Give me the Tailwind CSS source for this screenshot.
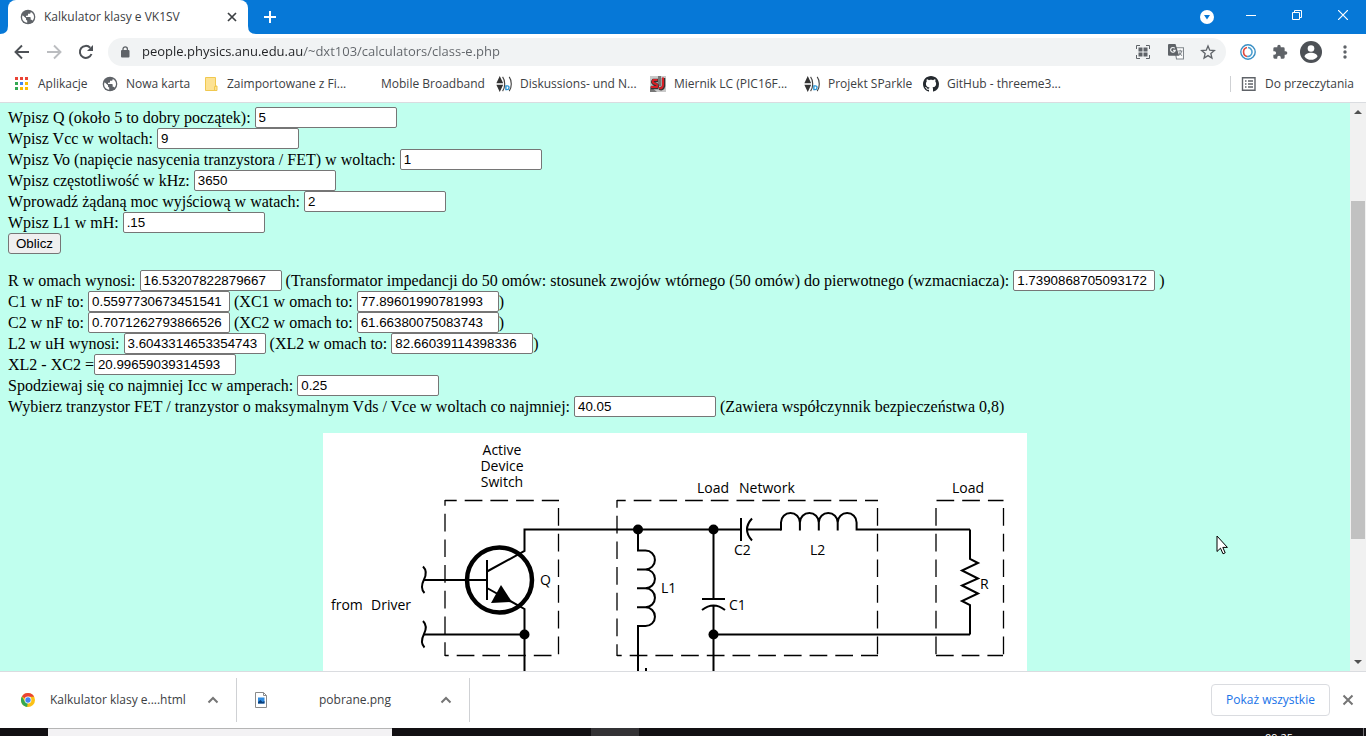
<!DOCTYPE html>
<html lang="pl">
<head>
  <meta charset="UTF-8" />
  <meta name="viewport" content="width=device-width, initial-scale=1.0" />
  <title>Kalkulator klasy e VK1SV</title>
  <script src="https://cdn.jsdelivr.net/npm/@tailwindcss/browser@4"></script>
</head>

<body class="h-screen flex flex-col overflow-hidden bg-white font-['Open_Sans',sans-serif] text-xs text-[#3c4043]">

  <!-- Shared icons -->
  <svg class="hidden">
    <symbol id="globe" viewBox="0 0 24 24">
      <circle cx="12" cy="12" r="11" fill="#5f6368" />
      <path fill="#fff" d="M4 9.500l5 4.500v1.500c0 1 .8 1.800 1.800 1.800v3.200C6 20 2.800 16 3.200 11.500zM18.800 17.500c-.3-.8-1-1.400-1.900-1.400h-.9v-3c0-.5-.4-1-1-1H9v-2h2c.6 0 1-.4 1-1v-2h2c1.100 0 2-.9 2-2v-.5c3 1.200 5 4 5 7.500 0 2-.8 4-2.200 5.400z" />
    </symbol>
    <symbol id="paren" viewBox="0 0 17 17">
      <path fill="#333" d="M4 0l3.500 7.500h-7zM4 17l3.500-7.500h-7z" />
      <path fill="none" stroke="#999" d="M.5 8.500h7" />
      <path fill="none" stroke="#444" stroke-width="1.200" d="M7 1c3 4 3 11 0 15M14 1c3 4 3 11 0 15" />
      <path fill="none" stroke="#2a95d5" stroke-width="1.500" d="M10.500 14.500v-4h1.500q2 0 1.800 2t-2 2z" />
    </symbol>
    <symbol id="chevron" viewBox="0 0 12 12">
      <path fill="none" stroke="#757575" stroke-width="2" d="M1.500 8.500L6 4l4.500 4.500" />
    </symbol>
  </svg>

  <!-- Tab strip -->
  <header class="h-[34px] flex-none flex bg-[#0678d7] pl-2">
    <div class="relative w-60 bg-white rounded-t-lg flex items-center pl-3 pr-2.5">
      <svg class="absolute -left-2 bottom-0 size-2" viewBox="0 0 8 8"><path fill="#fff" d="M8 0v8H0q8 0 8-8" /></svg>
      <svg class="absolute -right-2 bottom-0 size-2" viewBox="0 0 8 8"><path fill="#fff" d="M0 0v8h8q-8 0-8-8" /></svg>
      <svg class="size-4"><use href="#globe" /></svg>
      <span class="ml-2 flex-1 whitespace-nowrap">Kalkulator klasy e VK1SV</span>
      <button class="size-3" aria-label="Zamknij kartę">
        <svg viewBox="0 0 12 12"><path stroke="#3c4043" stroke-width="1.700" d="M2 2l8 8M10 2l-8 8" /></svg>
      </button>
    </div>
    <button class="ml-4 w-3" aria-label="Nowa karta">
      <svg viewBox="0 0 12 12"><path stroke="#fff" stroke-width="2" d="M6 0v12M0 6h12" /></svg>
    </button>
    <div class="ml-auto flex items-center">
      <button class="mr-8" aria-label="Wyszukaj karty">
        <svg class="size-3.5" viewBox="0 0 14 14"><circle cx="7" cy="7" r="7" fill="#fff" /><path fill="#0678d7" d="M4 5h6L7 9.500z" /></svg>
      </button>
      <button class="mr-9 pb-1" aria-label="Minimalizuj">
        <svg class="size-2.5" viewBox="0 0 10 10"><path stroke="#fff" d="M0 5.500h10" /></svg>
      </button>
      <button class="mr-9 pb-1" aria-label="Przywróć">
        <svg class="size-2.5" viewBox="0 0 10 10"><path fill="none" stroke="#fff" d="M.5 2.500h7v7h-7zM2.500 2.500v-2h7v7h-2" /></svg>
      </button>
      <button class="mr-[18px] pb-1" aria-label="Zamknij">
        <svg class="size-2.5" viewBox="0 0 10 10"><path stroke="#fff" stroke-width="1.200" d="M0 0l10 10M10 0L0 10" /></svg>
      </button>
    </div>
  </header>

  <!-- Toolbar -->
  <nav class="h-9 flex-none flex items-center px-3.5">
    <button class="mr-4" aria-label="Wstecz">
      <svg class="size-4" viewBox="0 0 16 16"><path fill="none" stroke="#4d5156" stroke-width="1.900" d="M15 8H2M8 1.500L1.500 8 8 14.500" /></svg>
    </button>
    <button class="mr-4" aria-label="Dalej">
      <svg class="size-4" viewBox="0 0 16 16"><path fill="none" stroke="#bbbdc0" stroke-width="1.900" d="M1 8h13M8 1.500L14.500 8 8 14.500" /></svg>
    </button>
    <button class="mr-3.5" aria-label="Odśwież">
      <svg class="size-4" viewBox="0 0 16 16"><path fill="none" stroke="#4d5156" stroke-width="2" d="M13.500 10a6 6 0 1 1-1.300-6.300" /><path fill="#4d5156" d="M15 1v6H9z" /></svg>
    </button>
    <div class="flex-1 h-7 rounded-full bg-[#f1f3f4] flex items-center pl-3 pr-2.5">
      <svg class="w-2.5 h-3.5 mr-3" viewBox="0 0 10 14"><rect x="1" y="5" width="8.500" height="7.500" rx="1" fill="#5f6368" /><path fill="none" stroke="#5f6368" stroke-width="1.300" d="M3 6V4a2.200 2.200 0 0 1 4.400 0v2" /></svg>
      <input aria-label="Adres" class="flex-1 min-w-0 outline-none text-[13px] bg-[linear-gradient(90deg,#202124_161px,#5f6368_161px)] bg-clip-text text-transparent" value="people.physics.anu.edu.au/~dxt103/calculators/class-e.php" />
      <button class="mr-[18px]" aria-label="Kod QR">
        <svg class="size-3.5" viewBox="0 0 14 14"><path fill="none" stroke="#5f6368" d="M.5 4V.5H4M10 .5h3.500V4M13.500 10v3.500H10M4 13.500H.5V10" /><path fill="#5f6368" d="M2.500 2.500h4v4h-4zM7.500 2.500h4v4h-4zM2.500 7.500h4v4h-4zM7.500 7.500h4v4h-4z" /></svg>
      </button>
      <button class="mr-4" aria-label="Przetłumacz">
        <svg class="size-4" viewBox="0 0 15 15"><path fill="#fff" stroke="#80868b" d="M6 3.500h8.500v10.500H8z" /><path fill="#5f6368" d="M1 0h6l3.500 11H1a1 1 0 0 1-1-1V1a1 1 0 0 1 1-1" /><path fill="none" stroke="#f1f3f4" stroke-width="1.100" d="M6.300 4a2.200 2.200 0 1 0 .5 2H4.800" /><path fill="none" stroke="#80868b" d="M9.500 6.500h4M11.500 5.500v1M13 6.500q-.5 2.500-3 4M10.500 8l2.500 3" /></svg>
      </button>
      <button aria-label="Dodaj do zakładek">
        <svg class="size-4" viewBox="0 0 24 24"><path fill="none" stroke="#5f6368" stroke-width="2" d="M12 3l2.600 6.200 6.900.6-5.200 4.500 1.600 6.700-5.900-3.600L6.100 21l1.600-6.700-5.200-4.500 6.900-.6z" /></svg>
      </button>
    </div>
    <button class="ml-3.5 mr-4" aria-label="Rozszerzenie">
      <svg class="size-4" viewBox="0 0 16 16"><circle cx="8" cy="8" r="7.200" fill="#fff" stroke="#3a8fc4" stroke-width="1.400" /><path fill="none" stroke="#4d9fd0" stroke-width="1.600" d="M8 3.500A4.500 4.500 0 1 1 7 12.500" /><path fill="none" stroke="#e04a3f" stroke-width="1.600" d="M7 12.500A4.600 4.600 0 0 1 7 3.600" /></svg>
    </button>
    <button class="mr-3" aria-label="Rozszerzenia">
      <svg class="size-4" viewBox="0 0 24 24"><path fill="#5f6368" d="M20.500 11H19V7a2 2 0 0 0-2-2h-4V3.500a2.500 2.500 0 0 0-5 0V5H4a2 2 0 0 0-2 2v3.800h1.500a2.700 2.700 0 0 1 0 5.400H2V20a2 2 0 0 0 2 2h3.800v-1.500a2.700 2.700 0 0 1 5.400 0V22H17a2 2 0 0 0 2-2v-4h1.500a2.500 2.500 0 0 0 0-5" /></svg>
    </button>
    <button class="mr-4" aria-label="Profil">
      <svg class="size-[22px]" viewBox="0 0 22 22"><circle cx="11" cy="11" r="11" fill="#4d5156" /><circle cx="11" cy="7.500" r="3.300" fill="#fff" /><path fill="#fff" d="M4.500 15.500c0-2.500 4-3.800 6.500-3.800s6.500 1.300 6.500 3.800a8 8 0 0 1-13 0" /></svg>
    </button>
    <button aria-label="Menu">
      <svg class="w-3.5 h-4" viewBox="0 0 14 16"><g fill="#5f6368"><circle cx="7" cy="3" r="1.700" /><circle cx="7" cy="8" r="1.700" /><circle cx="7" cy="13" r="1.700" /></g></svg>
    </button>
  </nav>

  <!-- Bookmarks bar -->
  <nav class="h-[33px] flex-none flex items-center pl-3.5 pr-3 pb-1 border-b border-[#dadce0] whitespace-nowrap">
    <a href="#" class="w-[88px] flex-none flex items-center gap-2">
      <svg class="size-4" viewBox="0 0 16 16"><path fill="#ea4335" d="M1 1h3v3H1zM6 1h3v3H6zM11 1h3v3h-3z" /><path fill="#34a853" d="M1 6h3v3H1zM1 11h3v3H1z" /><path fill="#4285f4" d="M6 6h3v3H6z" /><path fill="#fbbc04" d="M11 6h3v3h-3zM6 11h3v3H6zM11 11h3v3h-3z" /></svg>
      Aplikacje
    </a>
    <a href="#" class="w-[101px] flex-none flex items-center gap-2"><svg class="size-4"><use href="#globe" /></svg>Nowa karta</a>
    <a href="#" class="w-[154px] flex-none flex items-center gap-2">
      <svg class="size-4" viewBox="0 0 16 16"><path fill="#fde293" stroke="#f0c850" d="M2.500 1.500h10v8.500h1.500v4.500H2.500z" /><path fill="none" stroke="#f0c850" d="M11.500 14v-3.500h2" /></svg>
      Zaimportowane z Fi...
    </a>
    <a href="#" class="w-[139px] flex-none flex items-center gap-2"><span class="size-4"></span>Mobile Broadband</a>
    <a href="#" class="w-[154px] flex-none flex items-center gap-2"><svg class="size-4"><use href="#paren" /></svg>Diskussions- und N...</a>
    <a href="#" class="w-[154px] flex-none flex items-center gap-2">
      <svg class="size-4" viewBox="0 0 16 16"><path fill="#c9c9c9" d="M0 0h16v16H0z" /><path fill="#777" d="M0 10l7 6H0zM8 0h3v10H8z" /><path fill="none" stroke="#333" stroke-width="3.500" d="M8 4.500H3.500q-2 2 1 3.500 4 1 2.500 3.500H1M13.500 2v8q-1 4-4 2" /><path fill="none" stroke="#d61f26" stroke-width="2" d="M7.500 4H3.500q-2 2 1 3.500 4 1 2.500 3.500H1M13 1.500v8q-1 4-4 2" /></svg>
      Miernik LC (PIC16F...
    </a>
    <a href="#" class="w-[119px] flex-none flex items-center gap-2"><svg class="size-4"><use href="#paren" /></svg>Projekt SParkle</a>
    <a href="#" class="flex-none flex items-center gap-2">
      <svg class="size-4" viewBox="0 0 16 16"><path fill="#24292e" d="M8 0C3.580 0 0 3.580 0 8c0 3.540 2.290 6.530 5.470 7.590.4.070.55-.17.55-.38 0-.19-.01-.82-.01-1.490-2.010.37-2.530-.49-2.690-.94-.09-.23-.48-.94-.82-1.130-.28-.15-.68-.52-.01-.53.63-.01 1.080.58 1.230.82.72 1.210 1.870.87 2.330.66.07-.52.28-.87.51-1.070-1.780-.2-3.640-.89-3.640-3.950 0-.87.31-1.590.82-2.150-.08-.2-.36-1.020.08-2.120 0 0 .67-.21 2.200.82.64-.18 1.320-.27 2-.27s1.360.09 2 .27c1.530-1.040 2.200-.82 2.200-.82.44 1.100.16 1.920.08 2.120.51.56.82 1.270.82 2.150 0 3.070-1.870 3.750-3.650 3.950.29.25.54.73.54 1.480 0 1.070-.01 1.930-.01 2.200 0 .21.15.46.55.38A8.010 8.010 0 0 0 16 8c0-4.420-3.580-8-8-8" /></svg>
      GitHub - threeme3...
    </a>
    <a href="#" class="ml-auto flex-none flex items-center gap-2 border-l border-[#cfd1d4] pl-2.5">
      <svg class="size-4" viewBox="0 0 16 16"><path fill="none" stroke="#5f6368" stroke-width="1.400" d="M1.500 1.700h12.500v12.500H1.500z" /><path stroke="#5f6368" stroke-width="1.400" d="M4 5h1.500M7 5h5M4 8h1.500M7 8h5M4 11h1.500M7 11h5" /></svg>
      Do przeczytania
    </a>
  </nav>

  <!-- Page viewport with its scrollbar -->
  <div class="flex-1 min-h-0 flex">
    <main class="flex-1 min-w-0 overflow-hidden bg-[#c0ffee] px-2 pt-1 font-['Liberation_Serif',serif] text-base text-black whitespace-nowrap">
      <form>
        <div class="h-[21px] flex items-center gap-1">
          <label for="q">Wpisz Q (około 5 to dobry początek):</label>
          <input id="q" value="5" class="w-[142px] h-[21px] px-[3px] border border-[#767676] rounded-xs bg-white font-['Liberation_Sans',sans-serif] [font-size:smaller]" />
        </div>
        <div class="h-[21px] flex items-center gap-1">
          <label for="vcc">Wpisz Vcc w woltach:</label>
          <input id="vcc" value="9" class="w-[142px] h-[21px] px-[3px] border border-[#767676] rounded-xs bg-white font-['Liberation_Sans',sans-serif] [font-size:smaller]" />
        </div>
        <div class="h-[21px] flex items-center gap-1">
          <label for="vo">Wpisz Vo (napięcie nasycenia tranzystora / FET) w woltach:</label>
          <input id="vo" value="1" class="w-[142px] h-[21px] px-[3px] border border-[#767676] rounded-xs bg-white font-['Liberation_Sans',sans-serif] [font-size:smaller]" />
        </div>
        <div class="h-[21px] flex items-center gap-1">
          <label for="freq">Wpisz częstotliwość w kHz:</label>
          <input id="freq" value="3650" class="w-[142px] h-[21px] px-[3px] border border-[#767676] rounded-xs bg-white font-['Liberation_Sans',sans-serif] [font-size:smaller]" />
        </div>
        <div class="h-[21px] flex items-center gap-1">
          <label for="pout">Wprowadź żądaną moc wyjściową w watach:</label>
          <input id="pout" value="2" class="w-[142px] h-[21px] px-[3px] border border-[#767676] rounded-xs bg-white font-['Liberation_Sans',sans-serif] [font-size:smaller]" />
        </div>
        <div class="h-[21px] flex items-center gap-1">
          <label for="l1">Wpisz L1 w mH:</label>
          <input id="l1" value=".15" class="w-[142px] h-[21px] px-[3px] border border-[#767676] rounded-xs bg-white font-['Liberation_Sans',sans-serif] [font-size:smaller]" />
        </div>
        <button type="button" class="block w-[53px] h-[21px] leading-none border border-[#767676] rounded-[3px] bg-[#efefef] font-['Liberation_Sans',sans-serif] [font-size:smaller]">Oblicz</button>

        <!-- Results -->
        <div class="mt-4 h-[21px] flex items-center gap-1">
          <label for="r">R w omach wynosi:</label>
          <input id="r" value="16.53207822879667" class="w-[142px] h-[21px] px-[3px] border border-[#767676] rounded-xs bg-white font-['Liberation_Sans',sans-serif] [font-size:smaller]" />
          <label for="ratio">(Transformator impedancji do 50 omów: stosunek zwojów wtórnego (50 omów) do pierwotnego (wzmacniacza):</label>
          <input id="ratio" value="1.7390868705093172" class="w-[142px] h-[21px] px-[3px] border border-[#767676] rounded-xs bg-white font-['Liberation_Sans',sans-serif] [font-size:smaller]" />
          <span>)</span>
        </div>
        <div class="h-[21px] flex items-center gap-1">
          <label for="c1">C1 w nF to:</label>
          <input id="c1" value="0.5597730673451541" class="w-[142px] h-[21px] px-[3px] border border-[#767676] rounded-xs bg-white font-['Liberation_Sans',sans-serif] [font-size:smaller]" />
          <label for="xc1">(XC1 w omach to:</label>
          <div class="flex items-center">
            <input id="xc1" value="77.89601990781993" class="w-[142px] h-[21px] px-[3px] border border-[#767676] rounded-xs bg-white font-['Liberation_Sans',sans-serif] [font-size:smaller]" />
            <span>)</span>
          </div>
        </div>
        <div class="h-[21px] flex items-center gap-1">
          <label for="c2">C2 w nF to:</label>
          <input id="c2" value="0.7071262793866526" class="w-[142px] h-[21px] px-[3px] border border-[#767676] rounded-xs bg-white font-['Liberation_Sans',sans-serif] [font-size:smaller]" />
          <label for="xc2">(XC2 w omach to:</label>
          <div class="flex items-center">
            <input id="xc2" value="61.66380075083743" class="w-[142px] h-[21px] px-[3px] border border-[#767676] rounded-xs bg-white font-['Liberation_Sans',sans-serif] [font-size:smaller]" />
            <span>)</span>
          </div>
        </div>
        <div class="h-[21px] flex items-center gap-1">
          <label for="l2">L2 w uH wynosi:</label>
          <input id="l2" value="3.6043314653354743" class="w-[142px] h-[21px] px-[3px] border border-[#767676] rounded-xs bg-white font-['Liberation_Sans',sans-serif] [font-size:smaller]" />
          <label for="xl2">(XL2 w omach to:</label>
          <div class="flex items-center">
            <input id="xl2" value="82.66039114398336" class="w-[142px] h-[21px] px-[3px] border border-[#767676] rounded-xs bg-white font-['Liberation_Sans',sans-serif] [font-size:smaller]" />
            <span>)</span>
          </div>
        </div>
        <div class="h-[21px] flex items-center">
          <label for="diff">XL2 - XC2 =</label>
          <input id="diff" value="20.99659039314593" class="w-[142px] h-[21px] px-[3px] border border-[#767676] rounded-xs bg-white font-['Liberation_Sans',sans-serif] [font-size:smaller]" />
        </div>
        <div class="h-[21px] flex items-center gap-1">
          <label for="icc">Spodziewaj się co najmniej Icc w amperach:</label>
          <input id="icc" value="0.25" class="w-[142px] h-[21px] px-[3px] border border-[#767676] rounded-xs bg-white font-['Liberation_Sans',sans-serif] [font-size:smaller]" />
        </div>
        <div class="h-[21px] flex items-center gap-1">
          <label for="vds">Wybierz tranzystor FET / tranzystor o maksymalnym Vds / Vce w woltach co najmniej:</label>
          <input id="vds" value="40.05" class="w-[142px] h-[21px] px-[3px] border border-[#767676] rounded-xs bg-white font-['Liberation_Sans',sans-serif] [font-size:smaller]" />
          <span>(Zawiera współczynnik bezpieczeństwa 0,8)</span>
        </div>
      </form>

      <!-- Class E schematic -->
      <svg class="mt-4 mx-auto w-[704px] h-[360px] bg-white" viewBox="323 433 704 360" fill="none" stroke="#000" stroke-width="2">
        <!-- dashed group boxes -->
        <g stroke-width="1.300" stroke-dasharray="17.700 8">
          <path stroke-dashoffset="6" d="M445 500.500h114" />
          <path stroke-dashoffset="12" d="M445 500v156" />
          <path stroke-dashoffset="17.700" d="M558.500 500v156" />
          <path stroke-dashoffset="14" d="M445 655.500h114" />
          <path stroke-dashoffset="9" d="M617 500.500h261" />
          <path stroke-dashoffset="10" d="M617 500v156" />
          <path stroke-dashoffset="17.700" d="M877.500 500v156" />
          <path stroke-dashoffset="13" d="M617 655.500h261" />
          <path d="M936.500 500.500h67" />
          <path stroke-dashoffset="17.700" d="M936 500v156" />
          <path stroke-dashoffset="17.700" d="M1003.500 500v156" />
          <path d="M936 655.500h67" />
        </g>
        <!-- transistor and driver wires -->
        <circle cx="499.500" cy="580" r="32.500" stroke-width="4.500" />
        <path d="M424 580h63M487 560v40M487 571.500l37.500-20.500V529.500H741M487 588l37.500 21V800M424 634.500h100" />
        <path fill="#000" stroke="none" d="M501 585l-10 18 21-1z" />
        <path d="M423 566.500c3 3 3.500 8 1 13s-3 10 .5 13.500M423 621c3 3 3.500 8 1 13s-3 10 .5 13.500" />
        <!-- L1 -->
        <path d="M638 530v20.500h7.500a9.400 9.400 0 0 1 0 18.900H637h8.500a9.400 9.400 0 0 1 0 18.900H637h8.500a9.400 9.400 0 0 1 0 18.900H637h8.500a9.400 9.400 0 0 1 0 18.900H638V800M646 668v20" />
        <!-- C1 -->
        <path d="M713.500 530v69M702 599h23M702 610q11.500-9 23 0M713.500 605.500V800M713.500 634.500h256.500" />
        <!-- C2 -->
        <path d="M741 518v23M752 518.500q-10 11 0 22M747 529.500h34" />
        <!-- L2 -->
        <path d="M781 530.500v-8a9.400 9.400 0 0 1 18.900 0v8v-8a9.400 9.400 0 0 1 18.900 0v8v-8a9.400 9.400 0 0 1 18.900 0v8v-8a9.400 9.400 0 0 1 18.900 0v7H970" />
        <!-- R -->
        <path d="M970 529.500V559l8 4-16 7.500 16 8-16 7 16 8-16 7.500 8 4V634.500" />
        <g fill="#000" stroke="none">
          <circle cx="524.500" cy="634.500" r="5" /><circle cx="638" cy="529.500" r="5" />
          <circle cx="713.500" cy="529.500" r="5" /><circle cx="713.500" cy="634.500" r="5" />
        </g>
        <g fill="#000" stroke="none" font-family="Open Sans, sans-serif" font-size="14">
          <g text-anchor="middle">
            <text x="502" y="455">Active</text><text x="502" y="471">Device</text><text x="502" y="487">Switch</text>
          </g>
          <text x="331" y="610">from</text><text x="371" y="610">Driver</text>
          <text x="540" y="585">Q</text>
          <text x="697" y="493">Load</text><text x="739" y="493">Network</text><text x="952" y="493">Load</text>
          <text x="734" y="555">C2</text><text x="810" y="555">L2</text>
          <text x="661" y="593">L1</text><text x="729" y="610">C1</text><text x="980" y="589">R</text>
        </g>
      </svg>
    </main>

    <!-- Scrollbar -->
    <div class="w-4 flex-none bg-[#f1f1f1] flex flex-col items-center justify-between py-1.5">
      <svg class="w-2 h-1.5 flex-none" viewBox="0 0 8 6"><path fill="#505050" d="M0 5l4-4 4 4z" /></svg>
      <div class="w-3.5 flex-1 flex flex-col">
        <div class="flex-[86]"></div>
        <div class="flex-[338] bg-[#c1c1c1]"></div>
        <div class="flex-[120]"></div>
      </div>
      <svg class="w-2 h-1.5 flex-none" viewBox="0 0 8 6"><path fill="#505050" d="M0 1l4 4 4-4z" /></svg>
    </div>
  </div>

  <!-- Mouse pointer -->
  <svg class="absolute left-[1216px] top-[535px] w-3 h-5" viewBox="0 0 12 20"><path fill="#fff" stroke="#000" d="M1 1v15.500l3.500-3.300 2.500 5.600 2.200-1-2.400-5.400h4.600z" /></svg>

  <!-- Downloads bar -->
  <footer class="h-[57px] flex-none flex items-center border-t border-[#dadce0] pr-3">
    <div class="w-[237px] h-11 flex items-center border-r border-[#cfd1d4] pl-5 pr-[17px]">
      <svg class="size-4" viewBox="0 0 16 16"><circle cx="8" cy="8" r="7" fill="#fbc116" /><path fill="#ea4335" d="M8 8L1.900 4.500A7 7 0 0 1 14.100 4.700H8z" /><path fill="#34a853" d="M8 8l-.8 7A7 7 0 0 1 1.900 4.500L5 9.700z" /><circle cx="8" cy="8" r="3.400" fill="#fff" /><circle cx="8" cy="8" r="2.700" fill="#4285f4" /></svg>
      <span class="ml-3.5 flex-1 whitespace-nowrap">Kalkulator klasy e....html</span>
      <button aria-label="Opcje pliku html"><svg class="size-3"><use href="#chevron" /></svg></button>
    </div>
    <div class="w-[233px] h-11 flex items-center border-r border-[#cfd1d4] px-[17px]">
      <svg class="size-4" viewBox="0 0 16 16"><path fill="#fff" stroke="#8a8a8a" d="M1.500.5h8l3 3v12h-11z" /><path fill="none" stroke="#8a8a8a" d="M9.500.5v3h3" /><path fill="#2f8be0" d="M4 5.500h6.500v6H4z" /><path fill="#0b3f7a" d="M4 11.500V10l2.500-2 2 2 2-1v2.500z" /></svg>
      <span class="flex-1 text-center">pobrane.png</span>
      <button aria-label="Opcje pliku png"><svg class="size-3"><use href="#chevron" /></svg></button>
    </div>
    <button class="ml-auto w-[119px] h-8 border border-[#dadce0] rounded text-[#1a73e8] whitespace-nowrap">Pokaż wszystkie</button>
    <button class="ml-3" aria-label="Zamknij pasek">
      <svg class="size-3" viewBox="0 0 12 12"><path stroke="#757575" stroke-width="2" d="M1.500 1.500l9 9M10.500 1.500l-9 9" /></svg>
    </button>
  </footer>

  <!-- Top edge of the taskbar -->
  <div class="h-2 flex-none flex overflow-hidden bg-[#121013] pl-12 text-white">
    <div class="w-[344px] border-t border-[#b5b5b5] bg-[#f3f2f4]"></div>
    <div class="ml-[199px] w-12 bg-[#333235]"></div>
    <div class="ml-auto mr-[70px] text-[11px] leading-4 pt-0.5">09:25</div>
    <div class="w-px mr-0.5 bg-[#77757a]"></div>
  </div>
</body>
</html>
